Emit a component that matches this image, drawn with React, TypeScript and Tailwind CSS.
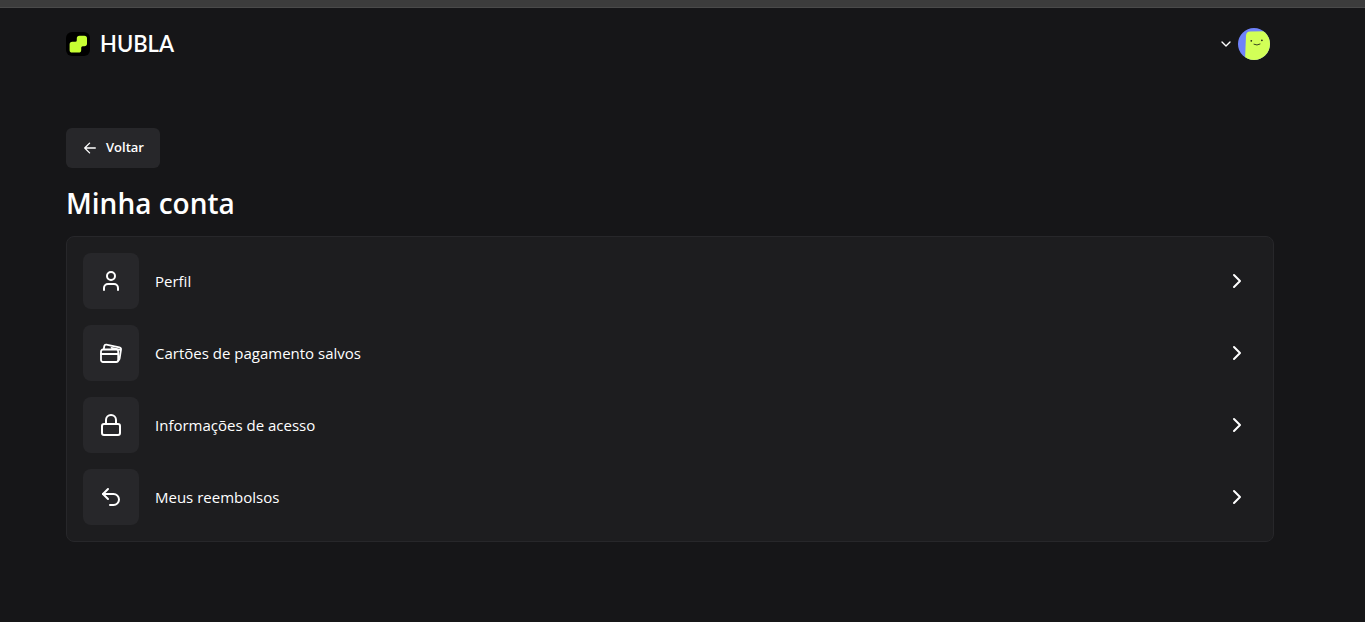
import type { ReactNode } from "react";
import { ChevronDown, ChevronRight, Lock, Undo2, User } from "lucide-react";

interface AccountItem {
  label: string;
  href: string;
  icon: ReactNode;
}

function HublaMark() {
  return (
    <svg className="h-6 w-6" viewBox="0 0 24 24" aria-hidden="true">
      <rect width="24" height="24" rx="6" fill="#000" />
      <path
        d="M13.5 3.8h4.800a2.700 2.700 0 0 1 2.700 2.700v5a2.700 2.700 0 0 1-2.700 2.700h-1.600a1.500 1.500 0 0 0-1.500 1.500v2.200a2.700 2.700 0 0 1-2.700 2.700H6.300a2.700 2.700 0 0 1-2.700-2.700v-5.500a2.700 2.700 0 0 1 2.700-2.700h3a1.500 1.500 0 0 0 1.500-1.500V6.500a2.700 2.700 0 0 1 2.700-2.700Z"
        fill="#c7ff33"
      />
    </svg>
  );
}

function Avatar() {
  return (
    <svg className="h-8 w-8" viewBox="0 0 32 32" aria-hidden="true">
      <defs>
        <clipPath id="avatar-clip">
          <circle cx="16" cy="16" r="16" />
        </clipPath>
      </defs>
      <g clipPath="url(#avatar-clip)">
        <rect width="32" height="32" fill="#6f82fa" />
        <path d="M7 32 8 7.500Q8.400 3.600 12 3.500L27 3.300Q31 3.300 32.500 8V32Z" fill="#d2ff57" />
        <circle cx="13.300" cy="12.800" r="0.900" fill="#26301a" />
        <circle cx="23.900" cy="12.300" r="0.900" fill="#26301a" />
        <path d="M16 16.300q3 1.600 6-.2" fill="none" stroke="#26301a" strokeWidth="0.900" strokeLinecap="round" />
      </g>
    </svg>
  );
}

function ArrowBack() {
  return (
    <svg className="h-4 w-4" viewBox="0 0 16 16" fill="none" stroke="currentColor" strokeWidth="1.300" strokeLinecap="round" strokeLinejoin="round" aria-hidden="true">
      <path d="M13.300 8H2.700M7.600 3.100 2.700 8l4.900 4.900" />
    </svg>
  );
}

function Cards() {
  return (
    <svg className="h-6 w-6" viewBox="0 0 24 24" fill="none" stroke="currentColor" strokeWidth="1.800" strokeLinecap="round" strokeLinejoin="round" aria-hidden="true">
      <rect x="2" y="8.500" width="17.200" height="12.500" rx="2" />
      <path d="M2 13h17.200" strokeWidth="2" />
      <path d="M4.800 8 5.300 5Q5.700 3.300 7.400 3.600L20.400 6.400Q22.300 6.900 22 8.600L20.600 17.500Q20.300 19 19.400 19.600" />
      <path d="m12.500 6.800 8.800 2" />
    </svg>
  );
}

const items: AccountItem[] = [
  { label: "Perfil", href: "#perfil", icon: <User className="h-6 w-6" /> },
  { label: "Cartões de pagamento salvos", href: "#cartoes", icon: <Cards /> },
  { label: "Informações de acesso", href: "#acesso", icon: <Lock className="h-6 w-6" /> },
  { label: "Meus reembolsos", href: "#reembolsos", icon: <Undo2 className="h-6 w-6" /> },
];

export default function App() {
  return (
    <div className="min-h-screen bg-[#161618] font-['Open_Sans','Noto_Sans',sans-serif] text-white">
      <div className="h-2 border-b border-[#4a4a4a] bg-[#3c3c3c]" />

      {/* Header */}
      <header className="flex h-18 items-center justify-between pr-[95px] pl-[66px]">
        <a href="#inicio" className="flex items-center gap-2.5">
          <HublaMark />
          <span className="font-[Lato,sans-serif] text-[22px] leading-6 font-semibold">HUBLA</span>
        </a>
        <button type="button" aria-label="Menu da conta" className="flex cursor-pointer items-center gap-1">
          <ChevronDown className="h-4 w-4" />
          <Avatar />
        </button>
      </header>

      <main className="pt-12 pr-[91px] pb-20 pl-[66px]">
        <button
          type="button"
          className="flex h-10 cursor-pointer items-center gap-2 rounded-md bg-[#27272a] px-4 text-[13px] font-semibold"
        >
          <ArrowBack />
          Voltar
        </button>

        <h1 className="mt-4 text-[28px] leading-[38px] font-semibold">Minha conta</h1>

        {/* Account sections */}
        <nav className="mt-3.5 rounded-lg border border-[#27272a] bg-[#1d1d1f] p-4">
          <ul className="flex flex-col gap-4">
            {items.map((item) => (
              <li key={item.label}>
                <a href={item.href} className="flex items-center gap-4">
                  <span className="flex h-14 w-14 items-center justify-center rounded-lg bg-[#27272a]">
                    {item.icon}
                  </span>
                  <span className="flex-1 text-[15px] leading-6">{item.label}</span>
                  <ChevronRight className="mr-2 h-6 w-6" />
                </a>
              </li>
            ))}
          </ul>
        </nav>
      </main>
    </div>
  );
}
